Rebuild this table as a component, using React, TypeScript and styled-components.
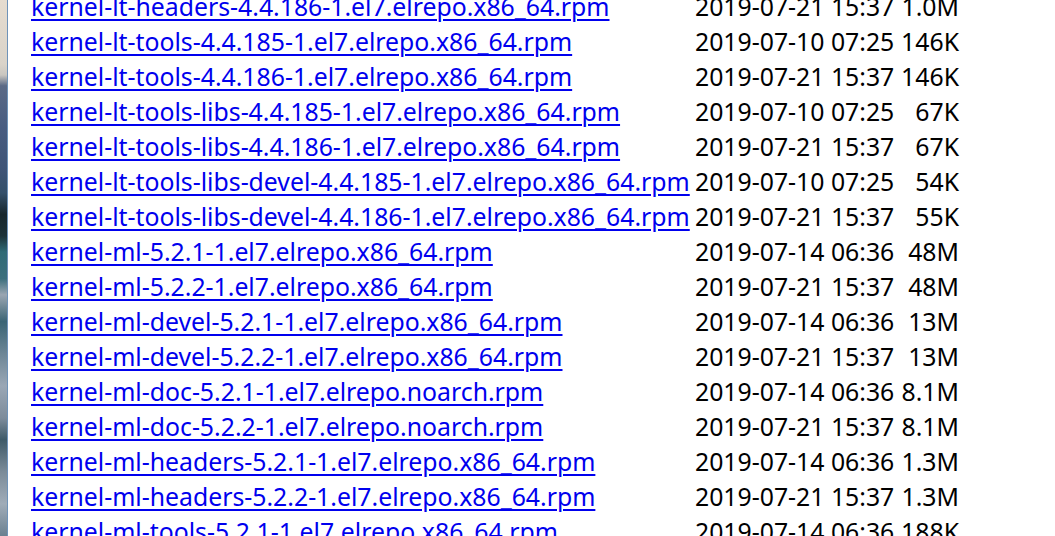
import React from "react";
import styled, { createGlobalStyle } from "styled-components";

const Global = createGlobalStyle`
  html, body { margin: 0; padding: 0; background: #fff; }
  body { overflow: hidden; }
`;

const Screen = styled.div`
  display: flex;
  width: 1055px;
  height: 536px;
  overflow: hidden;
  background: #fff;
`;

const Wallpaper = styled.div`
  flex: 0 0 7px;
  height: 100%;
  border-right: 1px solid #6f93b8;
  background: linear-gradient(
    180deg,
    #e6dccf 0%,
    #d9d3c9 12%,
    #c9c6c0 14%,
    #5b6a86 16%,
    #485c80 24%,
    #3e5476 32%,
    #34506a 36%,
    #17262c 40%,
    #1c3238 44%,
    #2f6a76 47%,
    #3c6f7d 52%,
    #9aa6b2 55%,
    #3a6474 60%,
    #6d8696 66%,
    #9aa7b5 72%,
    #7d8c9b 78%,
    #3e5a68 82%,
    #7b8b98 88%,
    #a0acb8 94%,
    #6a8090 100%
  );
`;

const Page = styled.main`
  flex: 1;
  height: 100%;
  overflow: hidden;
  padding-left: 23px;
  font-family: "Noto Sans", "Open Sans", sans-serif;
  font-size: 24.8px;
  color: #000;
`;

const Listing = styled.div`
  display: grid;
  grid-template-columns: 664px 200px 64px;
  grid-auto-rows: 35px;
  margin-top: -11px;
  align-items: center;
  white-space: nowrap;
`;

const NameCell = styled.div`
  line-height: 35px;
`;

const FileLink = styled.a`
  color: #0000ee;
  text-decoration: underline;
  text-decoration-thickness: 2px;
  text-underline-offset: 3px;
`;

const Cell = styled.div<{ $align?: "left" | "right" }>`
  line-height: 35px;
  text-align: ${(p) => p.$align ?? "left"};
`;

const rows: [string, string, string][] = [
  ["kernel-lt-headers-4.4.186-1.el7.elrepo.x86_64.rpm", "2019-07-21 15:37", "1.0M"],
  ["kernel-lt-tools-4.4.185-1.el7.elrepo.x86_64.rpm", "2019-07-10 07:25", "146K"],
  ["kernel-lt-tools-4.4.186-1.el7.elrepo.x86_64.rpm", "2019-07-21 15:37", "146K"],
  ["kernel-lt-tools-libs-4.4.185-1.el7.elrepo.x86_64.rpm", "2019-07-10 07:25", "67K"],
  ["kernel-lt-tools-libs-4.4.186-1.el7.elrepo.x86_64.rpm", "2019-07-21 15:37", "67K"],
  ["kernel-lt-tools-libs-devel-4.4.185-1.el7.elrepo.x86_64.rpm", "2019-07-10 07:25", "54K"],
  ["kernel-lt-tools-libs-devel-4.4.186-1.el7.elrepo.x86_64.rpm", "2019-07-21 15:37", "55K"],
  ["kernel-ml-5.2.1-1.el7.elrepo.x86_64.rpm", "2019-07-14 06:36", "48M"],
  ["kernel-ml-5.2.2-1.el7.elrepo.x86_64.rpm", "2019-07-21 15:37", "48M"],
  ["kernel-ml-devel-5.2.1-1.el7.elrepo.x86_64.rpm", "2019-07-14 06:36", "13M"],
  ["kernel-ml-devel-5.2.2-1.el7.elrepo.x86_64.rpm", "2019-07-21 15:37", "13M"],
  ["kernel-ml-doc-5.2.1-1.el7.elrepo.noarch.rpm", "2019-07-14 06:36", "8.1M"],
  ["kernel-ml-doc-5.2.2-1.el7.elrepo.noarch.rpm", "2019-07-21 15:37", "8.1M"],
  ["kernel-ml-headers-5.2.1-1.el7.elrepo.x86_64.rpm", "2019-07-14 06:36", "1.3M"],
  ["kernel-ml-headers-5.2.2-1.el7.elrepo.x86_64.rpm", "2019-07-21 15:37", "1.3M"],
  ["kernel-ml-tools-5.2.1-1.el7.elrepo.x86_64.rpm", "2019-07-14 06:36", "188K"],
];

export default function App() {
  return (
    <>
      <Global />
      <Screen>
        <Wallpaper />
        <Page>
          <Listing>
            {rows.map(([name, date, size]) => (
              <React.Fragment key={name}>
                <NameCell>
                  <FileLink href="#">{name}</FileLink>
                </NameCell>
                <Cell>{date}</Cell>
                <Cell $align="right">{size}</Cell>
              </React.Fragment>
            ))}
          </Listing>
        </Page>
      </Screen>
    </>
  );
}
